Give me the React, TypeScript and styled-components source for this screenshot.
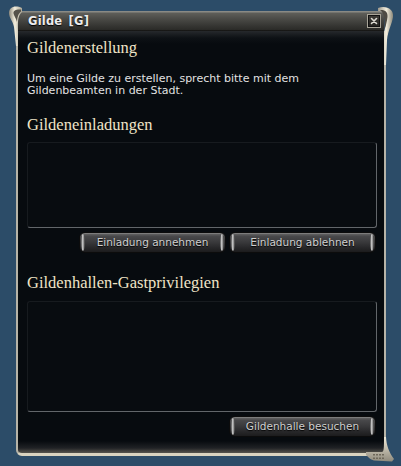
import React from 'react';
import styled, { createGlobalStyle } from 'styled-components';

const Global = createGlobalStyle`
  html, body { margin: 0; padding: 0; background: #2c4c68; }
  body { width: 401px; height: 466px; overflow: hidden; font-family: "DejaVu Sans", Verdana, sans-serif; }
`;

const Page = styled.div`
  width: 401px;
  height: 466px;
  box-sizing: border-box;
  padding: 11px 0 0 16px;
  background: #2c4c68;
`;

const Window = styled.section`
  position: relative;
  width: 370px;
  height: 445px;
  display: flex;
  flex-direction: column;
`;

const TitleBar = styled.header`
  height: 20px;
  margin: 0 2px;
  box-sizing: border-box;
  display: flex;
  align-items: center;
  justify-content: space-between;
  padding: 0 3px 0 10px;
  background: linear-gradient(
    to bottom,
    #8a8a84 0px,
    #8a8a84 1px,
    #5e5e59 2px,
    #474743 9px,
    #353532 15px,
    #2a2a27 19px,
    #050505 20px
  );
`;

const Title = styled.h1`
  margin: 0;
  font: bold 11.5px "DejaVu Sans", Verdana, sans-serif;
  color: #ececec;
  letter-spacing: 0.2px;
  word-spacing: 2px;
  white-space: pre;
  text-shadow: 0 1px 1px #000;
`;

const CloseButton = styled.button`
  width: 14px;
  height: 14px;
  padding: 0;
  border: 1px solid #a8a498;
  background: linear-gradient(#3e3c37, #23221f);
  box-shadow: inset 0 0 0 1px #111;
  display: flex;
  align-items: center;
  justify-content: center;
  cursor: pointer;
`;

const Body = styled.div`
  flex: 1;
  box-sizing: border-box;
  border-left: 2px solid #b7b4a8;
  border-right: 2px solid #b7b4a8;
  border-bottom: 3px solid #d9d3bf;
  border-radius: 0 0 4px 6px;
  padding: 8px 7px 0 9px;
  background: linear-gradient(
    to bottom,
    #26292c 0px,
    #0d1115 7px,
    #070b0f 13px,
    #070b0f calc(100% - 12px),
    #202225 calc(100% - 5px),
    #55534c 100%
  );
`;

const Heading = styled.h2<{ $top?: number }>`
  margin: ${(p) => p.$top ?? 0}px 0 0;
  font: normal 16.5px "Liberation Serif", "DejaVu Serif", serif;
  line-height: 18px;
  color: #efe4c8;
`;

const Paragraph = styled.p`
  margin: 16px 0 0;
  font-size: 11px;
  line-height: 12px;
  color: #e2e2e2;
`;

const ListBox = styled.div<{ $h: number; $top: number }>`
  height: ${(p) => p.$h}px;
  margin-top: ${(p) => p.$top}px;
  box-sizing: border-box;
  border: 1px solid;
  border-color: #171b1f #62666a #62666a #171b1f;
  border-radius: 3px;
  background: #080c10;
`;

const ButtonRow = styled.div`
  display: flex;
  justify-content: flex-end;
  gap: 3px;
  margin-top: 4px;
  padding-right: 1px;
`;

const GameButton = styled.button`
  position: relative;
  width: 147px;
  height: 21px;
  padding: 0 0 1px;
  border: 1px solid #0c0c0c;
  border-radius: 6px;
  background: linear-gradient(
    to bottom,
    #6a6a6a 0%,
    #48484a 18%,
    #38383a 50%,
    #262628 80%,
    #1c1c1d 100%
  );
  box-shadow: inset 0 1px 0 rgba(255, 255, 255, 0.15);
  color: #cfcfcf;
  font: 10.5px "DejaVu Sans", Verdana, sans-serif;
  text-shadow: 0 1px 1px #000;
  cursor: pointer;

  &::before,
  &::after {
    content: '';
    position: absolute;
    top: 1px;
    bottom: 1px;
    width: 4px;
    border-radius: 50%;
    background: linear-gradient(to right, #4a4a4a, #c8c8c8 40%, #8a8a8a 70%, #2e2e2e);
  }
  &::before { left: 1px; }
  &::after { right: 1px; }
`;

const Ornament = styled.svg<{ $left: number; $top: number }>`
  position: absolute;
  left: ${(p) => p.$left}px;
  top: ${(p) => p.$top}px;
  pointer-events: none;
`;

export default function App() {
  return (
    <Page>
      <Global />
      <Window>
        <TitleBar>
          <Title>Gilde [G]</Title>
          <CloseButton aria-label="Schließen">
            <svg width="8" height="8" viewBox="0 0 8 8">
              <path d="M1.5 1.5 L6.5 6.5 M6.5 1.5 L1.5 6.5" stroke="#dcdad2" strokeWidth="1.6" strokeLinecap="round" />
            </svg>
          </CloseButton>
        </TitleBar>
        <Body>
          <Heading>Gildenerstellung</Heading>
          <Paragraph>
            Um eine Gilde zu erstellen, sprecht bitte mit dem
            <br />
            Gildenbeamten in der Stadt.
          </Paragraph>
          <Heading $top={19}>Gildeneinladungen</Heading>
          <ListBox $h={86} $top={8} />
          <ButtonRow>
            <GameButton>Einladung annehmen</GameButton>
            <GameButton>Einladung ablehnen</GameButton>
          </ButtonRow>
          <Heading $top={21}>Gildenhallen-Gastprivilegien</Heading>
          <ListBox $h={111} $top={9} />
          <ButtonRow>
            <GameButton>Gildenhalle besuchen</GameButton>
          </ButtonRow>
        </Body>

        {/* top-left scroll curl */}
        <Ornament $left={-9} $top={-7} width="17" height="42" viewBox="7 4 17 42">
          <defs>
            <linearGradient id="tl" x1="0" y1="0" x2="1" y2="0">
              <stop offset="0" stopColor="#8c887c" />
              <stop offset="0.45" stopColor="#f3eedd" />
              <stop offset="1" stopColor="#a9a494" />
            </linearGradient>
          </defs>
          <path d="M22 8 C15 5, 9 7, 9 13 C9 18, 13 21, 14 27 L16 46 L18 46 L18 31 C18 24, 17 16, 22 12 Z" fill="url(#tl)" />
          <path d="M21 9.5 C17 9, 13 10, 13.5 13.5 C14 16, 16 18, 17 22 C17.5 17, 18 14, 21 11.5 Z" fill="#55524a" />
        </Ornament>

        {/* top-right scroll curl */}
        <Ornament $left={360} $top={-8} width="20" height="62" viewBox="376 3 20 62">
          <defs>
            <linearGradient id="tr" x1="0" y1="0" x2="1" y2="0">
              <stop offset="0" stopColor="#9a968a" />
              <stop offset="0.55" stopColor="#f3eedd" />
              <stop offset="1" stopColor="#8a8678" />
            </linearGradient>
          </defs>
          <path d="M378 8 C386 5, 394 9, 393 17 C392 24, 388 30, 387 40 L386 65 L384 65 L384 34 C385 26, 388 19, 384 13 C382 11, 380 11, 378 11 Z" fill="url(#tr)" />
          <path d="M380 10 C385 9.5, 388 12, 387.5 17 C387 22, 385.5 26, 384.5 30 C384.5 22, 385 16, 382 12 Z" fill="#4e4b44" />
        </Ornament>

        {/* bottom-right flare with grip */}
        <Ornament $left={350} $top={426} width="46" height="26" viewBox="366 437 46 26">
          <defs>
            <linearGradient id="br" x1="0" y1="0" x2="0" y2="1">
              <stop offset="0" stopColor="#f0ead8" />
              <stop offset="1" stopColor="#8f8a7c" />
            </linearGradient>
          </defs>
          <path d="M384 437 L386 437 C386.5 446, 389 452, 394 459 L392 461.5 L374 460.5 C371 460, 369 458, 366 455 L366 452 L382 452 C384 452, 384 447, 384 437 Z" fill="url(#br)" />
          {[373, 376, 379, 382].map((x) => (
            <g key={x} fill="#6e685a">
              <rect x={x} y={454} width="2" height="1.5" />
              <rect x={x} y={457.5} width="2" height="1.5" />
            </g>
          ))}
        </Ornament>
      </Window>
    </Page>
  );
}
